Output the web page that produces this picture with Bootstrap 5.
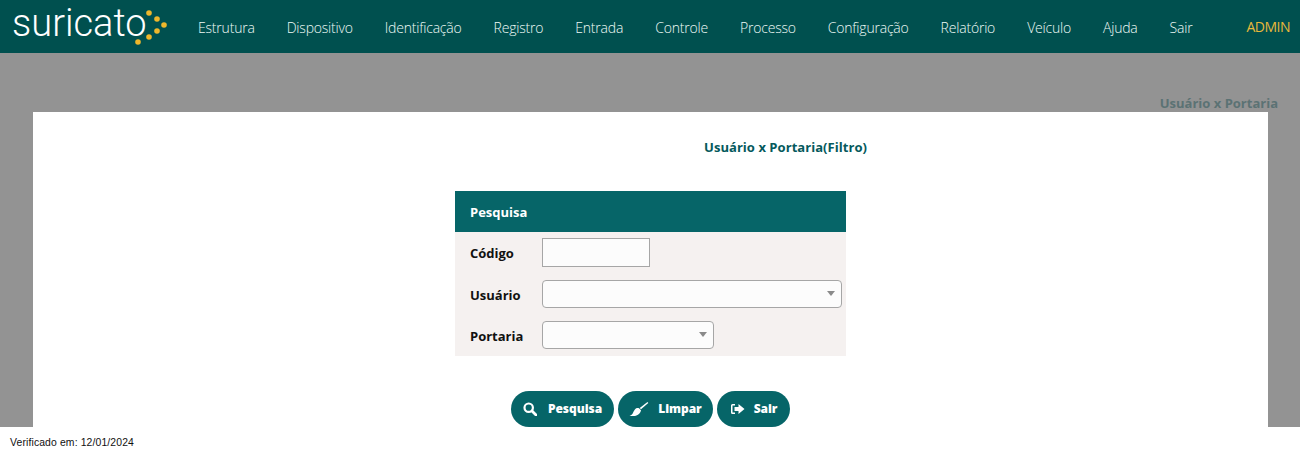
<!DOCTYPE html>
<html lang="pt-BR">
<head>
  <meta charset="UTF-8">
  <title>Usuário x Portaria</title>
  <link href="https://cdn.jsdelivr.net/npm/bootstrap@5.3.0/dist/css/bootstrap.min.css" rel="stylesheet">
  <style>
    html, body { height: 457px; overflow: hidden; }
    body { background: #fff; font-family: "Open Sans", sans-serif; }
    .top-bar { height: 53px; background: #00504f; padding: 0 10px 0 12px; }
    .logo-box { width: 186px; height: 53px; }
    .logo-word { font-family: Roboto, sans-serif; font-weight: 300; font-size: 38px; line-height: 45px; color: #fff; margin-top: 1px; }
    .logo-dots { margin-left: -10px; margin-top: 10px; overflow: visible; }
    .menu-list { gap: 32px; }
    .menu-link { font-weight: 300; font-size: 14px; color: #effaf6; padding: 1px 0 0; letter-spacing: -0.2px; }
    .user-name { font-size: 14px; color: #e8b83a; letter-spacing: -0.5px; }
    .gray-area { height: 374px; background: #939393; padding: 42px 32px 0 33px; }
    .crumb { height: 17px; font-size: 13px; font-weight: 700; color: #5b7274; line-height: 17px; margin-right: -10px; }
    .white-panel { height: 315px; background: #fff; }
    .panel-title { font-size: 13px; font-weight: 700; color: #05595c; padding: 26px 0 0 671px; line-height: 18px; height: 79px; letter-spacing: .05px; }
    .search-box { width: 391px; margin-left: 422px; background: #f5f1f0; height: 165px; }
    .search-head { height: 41px; background: #066568; color: #fff; font-size: 13px; font-weight: 700; padding: 2px 0 0 15px; }
    .field-row { height: 41px; padding-left: 15px; }
    .field-row label { width: 72px; font-size: 13px; font-weight: 700; color: #111; margin: 2px 0 0; }
    .field-row label.label-low { margin-top: 4px; }
    .code-input { width: 108px; height: 29px; border: 1px solid #a6a6a6; background: #fcfcfc; }
    .pick { height: 28px; border: 1px solid #a6a6a6; background: #fcfcfc; border-radius: 4px; padding-right: 6px; }
    .pick-wide { width: 300px; }
    .pick-small { width: 172px; }
    .pick-arrow { width: 0; height: 0; border-left: 4px solid transparent; border-right: 4px solid transparent; border-top: 5px solid #8a8a8a; }
    .action-row { gap: 4px; margin-top: 35px; margin-left: 478px; }
    .action-btn { height: 36px; border-radius: 18px; background: #066568; color: #fff; border: 0; font-size: 12px; font-weight: 800; padding: 0; letter-spacing: -.05px; }
    .action-btn:hover { background: #066568; color: #fff; }
    .btn-search { width: 103px; gap: 11px; }
    .btn-clear { width: 95px; gap: 9px; }
    .btn-exit { width: 73px; gap: 9px; }
    .verified { height: 30px; padding: 1px 0 0 10px; font-family: "Liberation Sans", Arial, sans-serif; font-size: 10.4px; color: #111; line-height: 30px; letter-spacing: .13px; }
  </style>
</head>
<body>

<nav class="top-bar d-flex align-items-center">
  <div class="logo-box d-flex align-items-start flex-shrink-0">
    <span class="logo-word">suricato</span>
    <svg class="logo-dots" width="30" height="36" viewBox="0 0 30 36">
      <g fill="#eeb72b">
        <circle cx="12" cy="3" r="2.800"/>
        <circle cx="20" cy="9" r="2.800"/>
        <circle cx="27" cy="15" r="2.800"/>
        <circle cx="20" cy="21" r="2.800"/>
        <circle cx="12" cy="27" r="2.800"/>
        <circle cx="1" cy="32" r="2.800"/>
      </g>
    </svg>
  </div>
  <ul class="nav menu-list flex-grow-1">
    <li class="nav-item"><a class="nav-link menu-link" href="#">Estrutura</a></li>
    <li class="nav-item"><a class="nav-link menu-link" href="#">Dispositivo</a></li>
    <li class="nav-item"><a class="nav-link menu-link" href="#">Identificação</a></li>
    <li class="nav-item"><a class="nav-link menu-link" href="#">Registro</a></li>
    <li class="nav-item"><a class="nav-link menu-link" href="#">Entrada</a></li>
    <li class="nav-item"><a class="nav-link menu-link" href="#">Controle</a></li>
    <li class="nav-item"><a class="nav-link menu-link" href="#">Processo</a></li>
    <li class="nav-item"><a class="nav-link menu-link" href="#">Configuração</a></li>
    <li class="nav-item"><a class="nav-link menu-link" href="#">Relatório</a></li>
    <li class="nav-item"><a class="nav-link menu-link" href="#">Veículo</a></li>
    <li class="nav-item"><a class="nav-link menu-link" href="#">Ajuda</a></li>
    <li class="nav-item"><a class="nav-link menu-link" href="#">Sair</a></li>
  </ul>
  <span class="user-name">ADMIN</span>
</nav>

<div class="gray-area">
  <div class="crumb text-end">Usuário x Portaria</div>
  <div class="white-panel">
    <div class="panel-title">Usuário x Portaria(Filtro)</div>
    <div class="search-box">
      <div class="search-head d-flex align-items-center">Pesquisa</div>
      <div class="field-row d-flex align-items-center">
        <label>Código</label>
        <div class="code-input"></div>
      </div>
      <div class="field-row d-flex align-items-center">
        <label class="label-low">Usuário</label>
        <div class="pick pick-wide d-flex align-items-center justify-content-end"><span class="pick-arrow"></span></div>
      </div>
      <div class="field-row d-flex align-items-center">
        <label class="label-low">Portaria</label>
        <div class="pick pick-small d-flex align-items-center justify-content-end"><span class="pick-arrow"></span></div>
      </div>
    </div>
    <div class="action-row d-flex">
      <button class="btn action-btn btn-search d-flex align-items-center justify-content-center">
        <svg width="14" height="14" viewBox="0 0 14 14" fill="none" stroke="#fff" stroke-width="2.200"><circle cx="5.700" cy="5.700" r="4.200"/><path d="M9 9l4 4" stroke-linecap="round" stroke-width="2.800"/></svg>
        Pesquisa
      </button>
      <button class="btn action-btn btn-clear d-flex align-items-center justify-content-center">
        <svg width="20" height="16" viewBox="0 0 20 16" fill="#fff"><path d="M18.500 1l.8.9-7.300 6.300-1.300-1.300z"/><path d="M10 7.300l2 2c-.4 2.700-3 5.400-6.300 5.700-1.800.2-4 0-5.200-.6 1.700-.3 2.800-1.200 3.400-2.500.6-1.100 1-2.200 2-3.400 1.100-1.200 2.700-1.700 4.100-1.200z"/></svg>
        Limpar
      </button>
      <button class="btn action-btn btn-exit d-flex align-items-center justify-content-center">
        <svg width="15" height="12" viewBox="0 0 15 12" fill="#fff"><path d="M5 1H2.500A1.500 1.500 0 0 0 1 2.500v7A1.500 1.500 0 0 0 2.500 11H5V9.500H2.500v-7H5z"/><path d="M8.500 1l6 5-6 5V8H4.500V4h4z"/></svg>
        Sair
      </button>
    </div>
  </div>
</div>

<div class="verified">Verificado em: 12/01/2024</div>

<script src="https://cdn.jsdelivr.net/npm/bootstrap@5.3.0/dist/js/bootstrap.bundle.min.js"></script>
</body>
</html>
